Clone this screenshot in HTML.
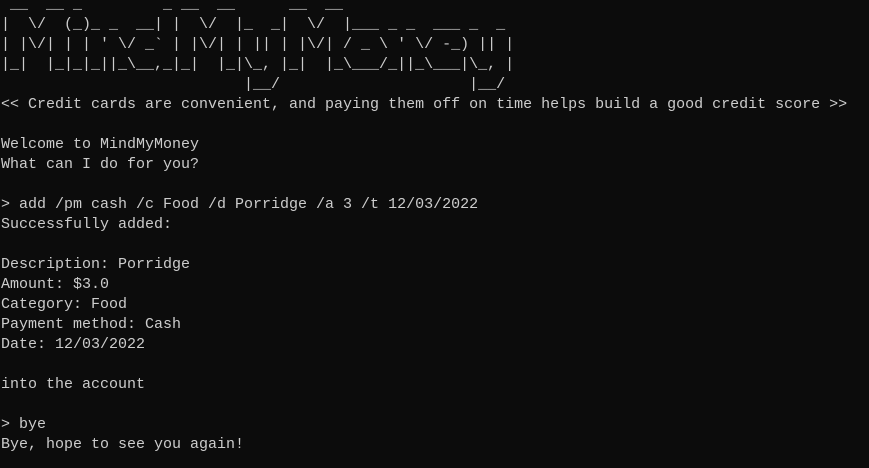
<!DOCTYPE html>
<html><head><meta charset="utf-8"><style>
html,body{margin:0;padding:0;background:#0c0c0c;width:869px;height:468px;overflow:hidden}
pre{margin:0;position:absolute;left:1px;top:-5px;font-family:"Liberation Mono",monospace;font-size:15px;line-height:20px;color:#cccccc;letter-spacing:0}
</style></head><body><pre> __  __ _         _ __  __      __  __
|  \/  (_)_ _  __| |  \/  |_  _|  \/  |___ _ _  ___ _  _
| |\/| | | ' \/ _` | |\/| | || | |\/| / _ \ ' \/ -_) || |
|_|  |_|_|_||_\__,_|_|  |_|\_, |_|  |_\___/_||_\___|\_, |
                           |__/                     |__/
&lt;&lt; Credit cards are convenient, and paying them off on time helps build a good credit score &gt;&gt;

Welcome to MindMyMoney
What can I do for you?

&gt; add /pm cash /c Food /d Porridge /a 3 /t 12/03/2022
Successfully added:

Description: Porridge
Amount: $3.0
Category: Food
Payment method: Cash
Date: 12/03/2022

into the account

&gt; bye
Bye, hope to see you again!
</pre></body></html>
